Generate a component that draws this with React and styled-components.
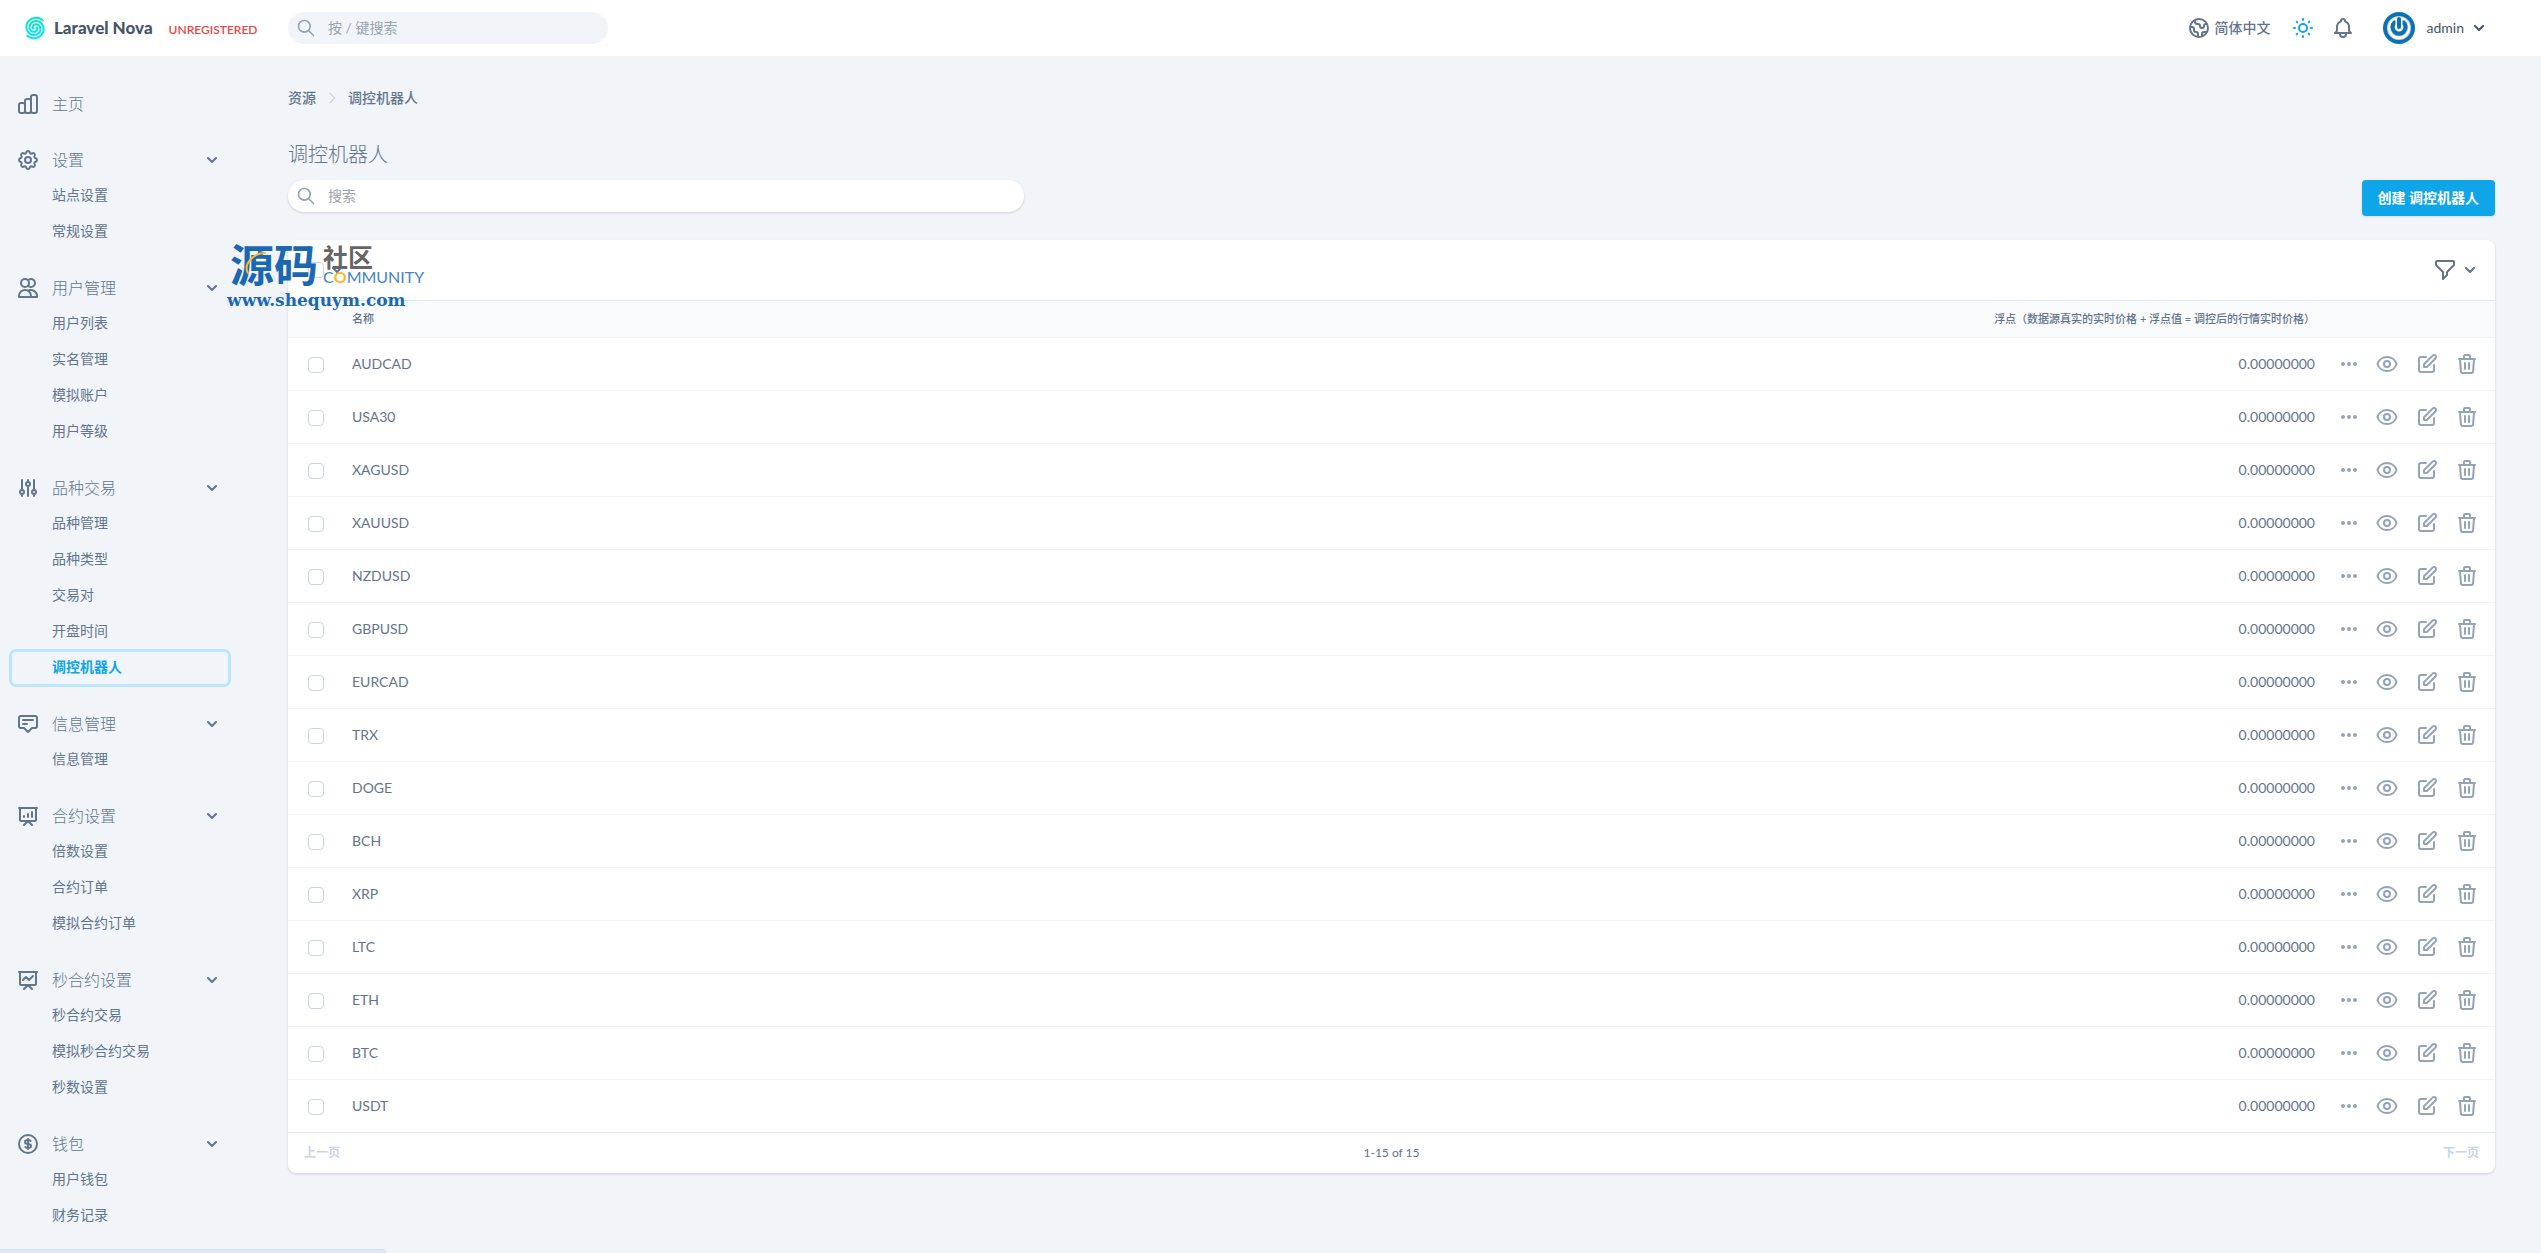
import React from 'react'
import styled, { createGlobalStyle } from 'styled-components'

const GlobalStyle = createGlobalStyle`
  * {
    box-sizing: border-box;
  }
  body {
    margin: 0;
    background: #f1f5f9;
    color: #64748b;
    font-family: Lato, 'Noto Sans CJK SC', sans-serif;
    font-size: 14px;
    line-height: 20px;
  }
  button, input {
    font: inherit;
    color: inherit;
  }
  a {
    color: inherit;
    text-decoration: none;
  }
`

// 24px outline icons
const icons = {
  home: ['M9 19v-6a2 2 0 00-2-2H5a2 2 0 00-2 2v6a2 2 0 002 2h2a2 2 0 002-2zm0 0V9a2 2 0 012-2h2a2 2 0 012 2v10m-6 0a2 2 0 002 2h2a2 2 0 002-2m0 0V5a2 2 0 012-2h2a2 2 0 012 2v14a2 2 0 01-2 2h-2a2 2 0 01-2-2z'],
  cog: [
    'M10.325 4.317c.426-1.756 2.924-1.756 3.35 0a1.724 1.724 0 002.573 1.066c1.543-.94 3.31.826 2.37 2.37a1.724 1.724 0 001.065 2.572c1.756.426 1.756 2.924 0 3.35a1.724 1.724 0 00-1.066 2.573c.94 1.543-.826 3.31-2.37 2.37a1.724 1.724 0 00-2.572 1.065c-.426 1.756-2.924 1.756-3.35 0a1.724 1.724 0 00-2.573-1.066c-1.543.94-3.31-.826-2.37-2.37a1.724 1.724 0 00-1.065-2.572c-1.756-.426-1.756-2.924 0-3.35a1.724 1.724 0 001.066-2.573c-.94-1.543.826-3.31 2.37-2.37.996.608 2.296.07 2.572-1.065z',
    'M15 12a3 3 0 11-6 0 3 3 0 016 0z',
  ],
  users: ['M12 4.354a4 4 0 110 5.292M15 21H3v-1a6 6 0 0112 0v1zm0 0h6v-1a6 6 0 00-9-5.197M13 7a4 4 0 11-8 0 4 4 0 018 0z'],
  adjustments: ['M12 6V4m0 2a2 2 0 100 4m0-4a2 2 0 110 4m-6 8a2 2 0 100-4m0 4a2 2 0 110-4m0 4v2m0-6V4m6 6v10m6-2a2 2 0 100-4m0 4a2 2 0 110-4m0 4v2m0-6V4'],
  annotation: ['M7 8h10M7 12h4m1 8l-4-4H5a2 2 0 01-2-2V6a2 2 0 012-2h14a2 2 0 012 2v8a2 2 0 01-2 2h-3l-4 4z'],
  chartBar: ['M8 13v-1m4 1v-3m4 3V8M8 21l4-4 4 4M3 4h18M4 4h16v12a1 1 0 01-1 1H5a1 1 0 01-1-1V4z'],
  chartLine: ['M7 12l3-3 3 3 4-4M8 21l4-4 4 4M3 4h18M4 4h16v12a1 1 0 01-1 1H5a1 1 0 01-1-1V4z'],
  dollar: ['M12 8c-1.657 0-3 .895-3 2s1.343 2 3 2 3 .895 3 2-1.343 2-3 2m0-8c1.11 0 2.08.402 2.599 1M12 8V7m0 1v8m0 0v1m0-1c-1.11 0-2.08-.402-2.599-1M21 12a9 9 0 11-18 0 9 9 0 0118 0z'],
  globe: ['M3.055 11H5a2 2 0 012 2v1a2 2 0 002 2 2 2 0 012 2v2.945M8 3.935V5.5A2.5 2.5 0 0010.5 8h.5a2 2 0 012 2 2 2 0 104 0 2 2 0 012-2h1.064M15 20.488V18a2 2 0 012-2h3.064M21 12a9 9 0 11-18 0 9 9 0 0118 0z'],
  sun: ['M12 3v1m0 16v1m9-9h-1M4 12H3m15.364 6.364l-.707-.707M6.343 6.343l-.707-.707m12.728 0l-.707.707M6.343 17.657l-.707.707M16 12a4 4 0 11-8 0 4 4 0 018 0z'],
  bell: ['M15 17h5l-1.405-1.405A2.032 2.032 0 0118 14.158V11a6.002 6.002 0 00-4-5.659V5a2 2 0 10-4 0v.341C7.67 6.165 6 8.388 6 11v3.159c0 .538-.214 1.055-.595 1.436L4 17h5m6 0v1a3 3 0 11-6 0v-1m6 0H9'],
  search: ['M21 21l-6-6m2-5a7 7 0 11-14 0 7 7 0 0114 0z'],
  filter: ['M3 4a1 1 0 011-1h16a1 1 0 011 1v2.586a1 1 0 01-.293.707l-6.414 6.414a1 1 0 00-.293.707V17l-4 4v-6.586a1 1 0 00-.293-.707L3.293 7.293A1 1 0 013 6.586V4z'],
  eye: [
    'M15 12a3 3 0 11-6 0 3 3 0 016 0z',
    'M2.458 12C3.732 7.943 7.523 5 12 5c4.478 0 8.268 2.943 9.542 7-1.274 4.057-5.064 7-9.542 7-4.477 0-8.268-2.943-9.542-7z',
  ],
  edit: ['M11 5H6a2 2 0 00-2 2v11a2 2 0 002 2h11a2 2 0 002-2v-5m-1.414-9.414a2 2 0 112.828 2.828L11.828 15H9v-2.828l8.586-8.586z'],
  trash: ['M19 7l-.867 12.142A2 2 0 0116.138 21H7.862a2 2 0 01-1.995-1.858L5 7m5 4v6m4-6v6m1-10V4a1 1 0 00-1-1h-4a1 1 0 00-1 1v3M4 7h16'],
  chevronRight: ['M9 5l7 7-7 7'],
}

const Icon = ({ name, size = 24 }) => (
  <svg width={size} height={size} viewBox="0 0 24 24" fill="none" stroke="currentColor" strokeWidth="2" strokeLinecap="round" strokeLinejoin="round" aria-hidden="true">
    {icons[name].map((d) => <path key={d} d={d} />)}
  </svg>
)

const Dots = () => (
  <svg width="20" height="20" viewBox="0 0 20 20" fill="currentColor" aria-hidden="true">
    <path d="M6 10a2 2 0 11-4 0 2 2 0 014 0zM12 10a2 2 0 11-4 0 2 2 0 014 0zM16 12a2 2 0 100-4 2 2 0 000 4z" />
  </svg>
)

const Caret = () => (
  <svg width="10" height="6" viewBox="0 0 10 6" fill="currentColor" aria-hidden="true">
    <path d="M8.293.293a1 1 0 1 1 1.414 1.414l-4 4a1 1 0 0 1-1.414 0l-4-4A1 1 0 1 1 1.707.293L5 3.586 8.293.293z" />
  </svg>
)

// one arm of the logo's spiral, from the centre out to the given angle
const spiral = (end) => {
  const steps = 48
  const points = []
  for (let i = 0; i <= steps; i++) {
    const t = i / steps
    const angle = ((end - 520 * (1 - t)) * Math.PI) / 180
    const r = 1.6 + 9.4 * t
    points.push(`${(12 + r * Math.cos(angle)).toFixed(2)} ${(12 + r * Math.sin(angle)).toFixed(2)}`)
  }
  return `M${points.join('L')}`
}

const sections = [
  { title: '设置', icon: 'cog', items: ['站点设置', '常规设置'] },
  { title: '用户管理', icon: 'users', items: ['用户列表', '实名管理', '模拟账户', '用户等级'] },
  { title: '品种交易', icon: 'adjustments', items: ['品种管理', '品种类型', '交易对', '开盘时间', '调控机器人'] },
  { title: '信息管理', icon: 'annotation', items: ['信息管理'] },
  { title: '合约设置', icon: 'chartBar', items: ['倍数设置', '合约订单', '模拟合约订单'] },
  { title: '秒合约设置', icon: 'chartLine', items: ['秒合约交易', '模拟秒合约交易', '秒数设置'] },
  { title: '钱包', icon: 'dollar', items: ['用户钱包', '财务记录'] },
]

const robots = ['AUDCAD', 'USA30', 'XAGUSD', 'XAUUSD', 'NZDUSD', 'GBPUSD', 'EURCAD', 'TRX', 'DOGE', 'BCH', 'XRP', 'LTC', 'ETH', 'BTC', 'USDT']

function Header() {
  return (
    <StHeader>
      <StBrand>
        <StLogo href="#">
          <svg width="24" height="24" viewBox="0 0 24 24" fill="none" stroke="url(#nova)" strokeWidth="2" strokeLinecap="round" aria-hidden="true">
            <defs>
              <linearGradient id="nova" x1="0" y1="0" x2="0" y2="1">
                <stop offset="0" stopColor="#06e8b9" />
                <stop offset="1" stopColor="#00e5ff" />
              </linearGradient>
            </defs>
            <path d={spiral(-45)} />
            <path d={spiral(135)} />
          </svg>
          <StLogoText>Laravel Nova</StLogoText>
        </StLogo>
        <StUnregistered href="#">UNREGISTERED</StUnregistered>
      </StBrand>
      <StSearch $width="320px" $bg="#f1f5f9">
        <Icon name="search" size={20} />
        <input type="search" placeholder="按 / 键搜索" aria-label="按 / 键搜索" />
      </StSearch>
      <StTools>
        <StLocaleButton type="button"><Icon name="globe" />简体中文</StLocaleButton>
        <StToolButton type="button" $color="#0ea5e9" aria-label="主题"><Icon name="sun" /></StToolButton>
        <StToolButton type="button" aria-label="通知"><Icon name="bell" /></StToolButton>
        <StUserButton type="button">
          <svg width="32" height="32" viewBox="0 0 32 32" fill="none" strokeLinecap="round" aria-hidden="true">
            <circle cx="16" cy="16" r="16" fill="#0a73b7" />
            <circle cx="16" cy="16" r="12" fill="#d6d1ca" />
            <circle cx="16" cy="16" r="11" fill="#fff" />
            <path d="M12 10.500a6.500 6.500 0 1 0 8.500 0" stroke="#c9c4bd" strokeWidth="5" />
            <path d="M11.500 10.500a6.500 6.500 0 1 0 9 0" stroke="#0a73b7" strokeWidth="4" />
            <path d="M16 6v9" stroke="#fff" strokeWidth="7" strokeLinecap="butt" />
            <path d="M16 7v8" stroke="#0a73b7" strokeWidth="4" />
          </svg>
          <span>admin</span>
          <Caret />
        </StUserButton>
      </StTools>
    </StHeader>
  )
}

function Sidebar() {
  return (
    <StSidebar>
      <StSectionLink href="#"><Icon name="home" />主页</StSectionLink>
      {sections.map((section) => (
        <StSection key={section.title}>
          <StSectionButton type="button">
            <Icon name={section.icon} />
            <span>{section.title}</span>
            <Caret />
          </StSectionButton>
          <StMenu>
            {section.items.map((item) => (
              <li key={item}>
                <StMenuLink href="#" $active={item === '调控机器人'}>{item}</StMenuLink>
              </li>
            ))}
          </StMenu>
        </StSection>
      ))}
    </StSidebar>
  )
}

function ResourceTable() {
  return (
    <StTable>
      <thead>
        <tr>
          <StTh $check aria-label="选择" />
          <StTh>名称</StTh>
          <StTh $right>浮点（数据源真实的实时价格 + 浮点值 = 调控后的行情实时价格）</StTh>
          <StTh $actions aria-label="操作" />
        </tr>
      </thead>
      <tbody>
        {robots.map((name) => (
          <tr key={name}>
            <StTd $check><StCheckbox type="checkbox" aria-label={name} /></StTd>
            <StTd>{name}</StTd>
            <StTd $right>0.00000000</StTd>
            <StTd $actions>
              <StActions>
                <StAction type="button" aria-label="更多"><Dots /></StAction>
                <StAction type="button" aria-label="查看"><Icon name="eye" /></StAction>
                <StAction type="button" aria-label="编辑"><Icon name="edit" /></StAction>
                <StAction type="button" aria-label="删除"><Icon name="trash" /></StAction>
              </StActions>
            </StTd>
          </tr>
        ))}
      </tbody>
    </StTable>
  )
}

function Watermark() {
  return (
    <StWatermark>
      <StMarkRow>
        <StMarkBig>源码</StMarkBig>
        <StMarkSide>
          <StMarkSmall>社区</StMarkSmall>
          <StMarkLatin>C<b>O</b>MMUNITY</StMarkLatin>
        </StMarkSide>
      </StMarkRow>
      <StMarkUrl>www.shequym.com</StMarkUrl>
      <StSwoosh width="22" height="24" viewBox="0 0 22 24" fill="none" aria-hidden="true">
        <path d="M3 22C-2 14 8 2 20 2" stroke="#fbb829" strokeWidth="2" strokeLinecap="round" />
      </StSwoosh>
    </StWatermark>
  )
}

function App() {
  return (
    <>
      <GlobalStyle />
      <Header />
      <StLayout>
        <Sidebar />
        <StMain>
          <StBreadcrumb>
            <a href="#">资源</a>
            <Icon name="chevronRight" size={16} />
            <span>调控机器人</span>
          </StBreadcrumb>
          <StH1>调控机器人</StH1>
          <StControls>
            <StSearch $width="33.3333%" $bg="#fff" $shadow>
              <Icon name="search" size={20} />
              <input type="search" placeholder="搜索" aria-label="搜索" />
            </StSearch>
            <StCreateButton type="button">创建 调控机器人</StCreateButton>
          </StControls>
          <StCard>
            <StToolbar>
              <StSelectAll>
                <StCheckbox type="checkbox" aria-label="全选" />
                <Caret />
              </StSelectAll>
              <StFilterButton type="button" aria-label="筛选"><Icon name="filter" /><Caret /></StFilterButton>
            </StToolbar>
            <ResourceTable />
            <StPagination>
              <StPageButton type="button" disabled>上一页</StPageButton>
              <span>1-15 of 15</span>
              <StPageButton type="button" disabled>下一页</StPageButton>
            </StPagination>
            <Watermark />
          </StCard>
        </StMain>
      </StLayout>
      <StStatusBar />
    </>
  )
}

const StHeader = styled.header`
  display: flex;
  align-items: center;
  height: 56px;
  padding-right: 57px;
  background: #fff;
`
const StBrand = styled.div`
  display: flex;
  align-items: center;
  gap: 16px;
  width: 288px;
  padding-left: 23px;
`
const StLogo = styled.a`
  display: flex;
  align-items: center;
  gap: 7px;
`
const StLogoText = styled.span`
  color: #475569;
  font-size: 17px;
  font-weight: 900;
`
const StUnregistered = styled.a`
  padding-top: 3px;
  color: #ef4444;
  font-size: 12px;
  font-weight: 600;
`
const StSearch = styled.label`
  display: flex;
  align-items: center;
  gap: 12px;
  width: ${(props) => props.$width};
  height: 32px;
  padding: 0 8px;
  border-radius: 16px;
  background: ${(props) => props.$bg};
  color: #94a3b8;
  box-shadow: ${(props) => (props.$shadow ? '0 1px 3px rgba(0, 0, 0, 0.1), 0 1px 2px rgba(0, 0, 0, 0.06)' : 'none')};
  input {
    flex: 1;
    min-width: 0;
    padding: 0;
    border: 0;
    outline: 0;
    background: transparent;
  }
  input::placeholder {
    color: #9ca3af;
  }
`
const StTools = styled.div`
  display: flex;
  align-items: center;
  gap: 16px;
  margin-left: auto;
`
const StToolButton = styled.button`
  display: flex;
  align-items: center;
  gap: 4px;
  padding: 0;
  border: 0;
  background: none;
  color: ${(props) => props.$color || '#64748b'};
  cursor: pointer;
`
const StLocaleButton = styled(StToolButton)`
  margin-right: 4px;
  font-weight: 500;
`
const StUserButton = styled.button`
  display: flex;
  align-items: center;
  gap: 10px;
  margin-left: 12px;
  padding: 0;
  border: 0;
  background: none;
  color: #475569;
  cursor: pointer;
  span {
    padding-left: 2px;
  }
`
const StLayout = styled.div`
  display: flex;
`
const StSidebar = styled.nav`
  display: flex;
  flex-direction: column;
  flex: none;
  gap: 24px;
  width: 240px;
  padding: 32px 12px 20px;
`
const StSection = styled.div`
  display: flex;
  flex-direction: column;
  gap: 4px;
`
const StSectionLink = styled.a`
  display: flex;
  align-items: center;
  gap: 12px;
  height: 32px;
  padding: 0 4px;
  font-size: 16px;
  font-weight: 300;
`
const StSectionButton = styled.button`
  display: flex;
  align-items: center;
  gap: 12px;
  height: 32px;
  padding: 0 11px 0 4px;
  border: 0;
  background: none;
  font-size: 16px;
  font-weight: 300;
  text-align: left;
  cursor: pointer;
  span {
    flex: 1;
  }
`
const StMenu = styled.ul`
  display: flex;
  flex-direction: column;
  gap: 4px;
  margin: 0;
  padding: 0;
  list-style: none;
`
const StMenuLink = styled.a`
  display: block;
  padding: 5px 0 7px 40px;
  border-radius: 4px;
  color: ${(props) => (props.$active ? '#0ea5e9' : '#64748b')};
  font-weight: ${(props) => (props.$active ? 700 : 400)};
  box-shadow: ${(props) => (props.$active ? '0 0 0 3px #bae6fd' : 'none')};
`
const StMain = styled.main`
  flex: 1;
  min-width: 0;
  padding: 32px 46px 32px 48px;
`
const StBreadcrumb = styled.nav`
  display: flex;
  align-items: center;
  gap: 8px;
  margin-bottom: 32px;
  font-weight: 500;
  svg {
    color: #cbd5e1;
  }
`
const StH1 = styled.h1`
  margin: 0 0 12px;
  font-size: 20px;
  font-weight: 300;
  line-height: 28px;
`
const StControls = styled.div`
  display: flex;
  align-items: flex-start;
  justify-content: space-between;
  margin-bottom: 24px;
`
const StCreateButton = styled.button`
  height: 36px;
  padding: 0 16px;
  border: 0;
  border-radius: 4px;
  background: #0ea5e9;
  color: #fff;
  font-weight: 700;
  box-shadow: 0 1px 3px rgba(0, 0, 0, 0.1);
  cursor: pointer;
`
const StCard = styled.section`
  position: relative;
  border-radius: 8px;
  background: #fff;
  box-shadow: 0 1px 3px rgba(0, 0, 0, 0.1), 0 1px 2px rgba(0, 0, 0, 0.06);
`
const StToolbar = styled.div`
  display: flex;
  align-items: center;
  justify-content: space-between;
  height: 60px;
  padding: 0 20px;
`
const StSelectAll = styled.div`
  display: flex;
  align-items: center;
  gap: 8px;
`
const StFilterButton = styled.button`
  display: flex;
  align-items: center;
  gap: 8px;
  padding: 0;
  border: 0;
  background: none;
  cursor: pointer;
`
const StCheckbox = styled.input`
  display: block;
  appearance: none;
  width: 16px;
  height: 16px;
  margin: 0;
  border: 1px solid #cbd5e1;
  border-radius: 4px;
  background: #fff;
`
const StTable = styled.table`
  width: 100%;
  border-collapse: separate;
  border-spacing: 0;
`
const cellWidth = (props) => {
  if (props.$check) return '56px'
  if (props.$actions) return '172px'
  return 'auto'
}
const StTh = styled.th`
  width: ${cellWidth};
  height: 38px;
  padding: 0 8px;
  border-top: 1px solid #e2e8f0;
  border-bottom: 1px solid #f1f5f9;
  background: #f8fafc;
  font-size: 11px;
  font-weight: 500;
  line-height: 16px;
  text-align: ${(props) => (props.$right ? 'right' : 'left')};
`
const StTd = styled.td`
  width: ${cellWidth};
  height: 53px;
  padding: ${(props) => (props.$check ? '2px 20px 0' : '0 8px')};
  border-bottom: 1px solid #f1f5f9;
  text-align: ${(props) => (props.$right ? 'right' : 'left')};
  tr:last-child & {
    border-bottom-color: #e2e8f0;
  }
`
const StActions = styled.div`
  display: flex;
  align-items: center;
  justify-content: flex-end;
  gap: 16px;
  padding-right: 8px;
`
const StAction = styled.button`
  display: flex;
  padding: 0;
  border: 0;
  background: none;
  color: #94a3b8;
  cursor: pointer;
`
const StPagination = styled.div`
  display: flex;
  align-items: center;
  justify-content: space-between;
  height: 40px;
  padding: 0 16px;
  font-size: 12px;
`
const StPageButton = styled.button`
  padding: 0;
  border: 0;
  background: none;
  color: #cbd5e1;
  font-weight: 700;
`
const StWatermark = styled.div`
  position: absolute;
  top: 0;
  left: -61px;
  color: #1a68b4;
  pointer-events: none;
`
const StMarkRow = styled.div`
  display: flex;
  gap: 5px;
  height: 50px;
  padding-left: 3px;
`
const StMarkBig = styled.span`
  font-size: 44px;
  font-weight: 700;
  line-height: 50px;
`
const StMarkSide = styled.span`
  display: flex;
  flex-direction: column;
  padding-top: 5px;
`
const StMarkSmall = styled.span`
  color: #666;
  font-size: 25px;
  font-weight: 700;
  line-height: 24px;
`
const StMarkLatin = styled.span`
  color: #4484c5;
  font-size: 16px;
  line-height: 16px;
  b {
    color: #fbb829;
  }
`
const StMarkUrl = styled.div`
  font-family: 'DejaVu Serif', serif;
  font-size: 17px;
  font-weight: 700;
`
const StSwoosh = styled.svg`
  position: absolute;
  top: 11px;
  left: 18px;
`
const StStatusBar = styled.div`
  position: fixed;
  bottom: 0;
  left: 0;
  width: 386px;
  height: 4px;
  border-top: 1px solid #dadce0;
  border-right: 1px solid #dadce0;
  border-radius: 0 4px 0 0;
  background: #dee8fb;
`

export default App
